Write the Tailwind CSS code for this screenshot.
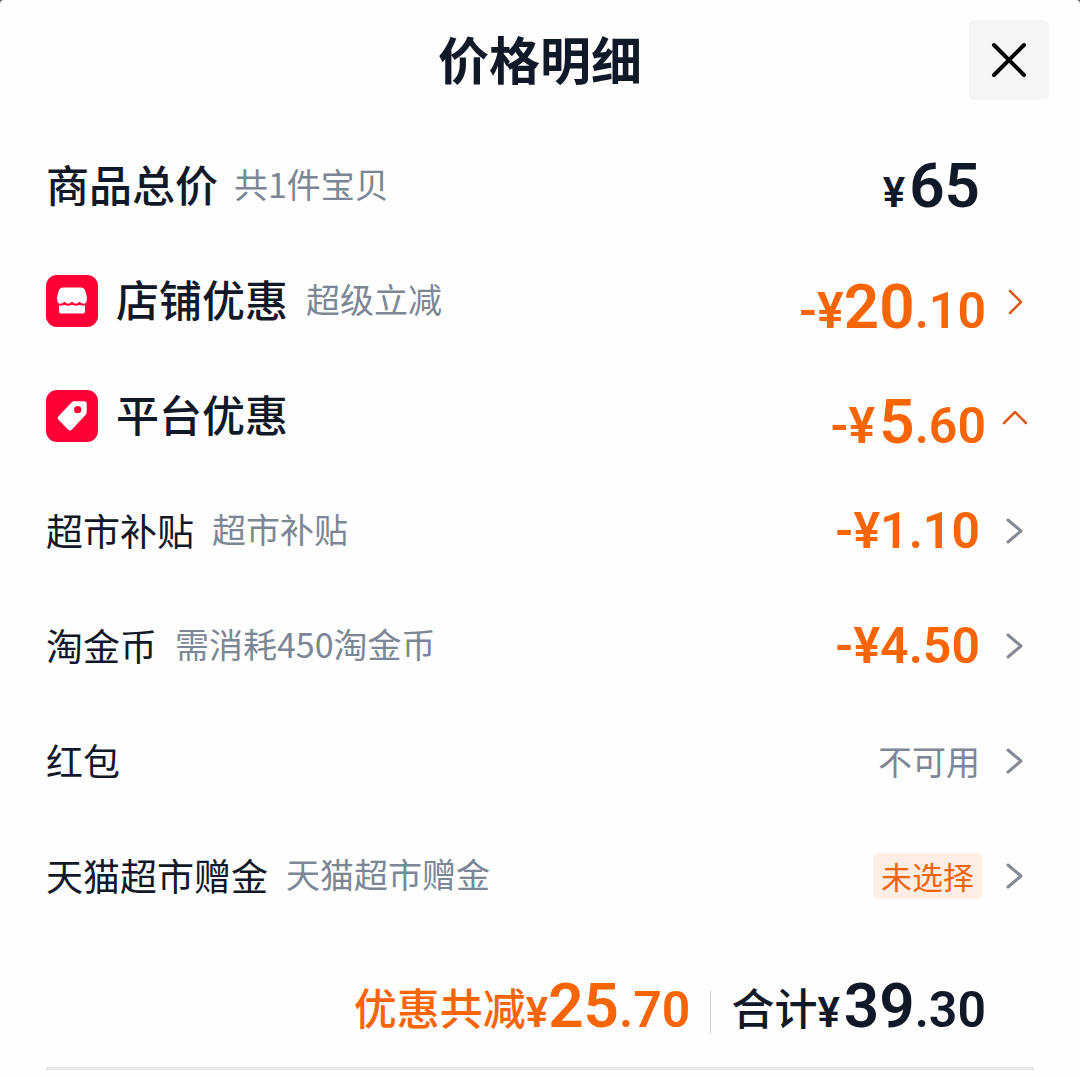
<!DOCTYPE html>
<html lang="zh-CN">
    <head>
        <meta charset="UTF-8">
        <meta name="viewport" content="width=device-width, initial-scale=1.0">
        <title>价格明细</title>
        <script src="https://cdn.jsdelivr.net/npm/@tailwindcss/browser@4"></script>
    </head>
    <body class="bg-[#555555] font-['Noto_Sans_CJK_SC',sans-serif] text-[#111827]">
        <main class="min-h-screen bg-[#fefefe] rounded-t-sm">
            <!-- Header -->
            <header class="grid grid-cols-[80px_1fr_80px] items-center h-30 px-[31px]">
                <h1 class="col-start-2 pb-1 text-center text-[51px] leading-none font-bold">价格明细</h1>
                <button type="button" aria-label="关闭" class="flex items-center justify-center size-20 rounded-md bg-[#f3f5f7] text-black">
                    <svg class="size-10" viewBox="0 0 40 40" fill="none" stroke="currentColor" stroke-width="4" stroke-linecap="round"><path d="M5 5L35 35M35 5L5 35"/></svg>
                </button>
            </header>

            <!-- Price rows -->
            <ul class="mt-2 px-[46px]">
                <li class="flex items-center h-[115px]">
                    <span class="pb-1 text-[43px] leading-none font-medium">商品总价</span>
                    <span class="ml-4 pb-1 text-[34px] leading-none text-[#7c8795]">共1件宝贝</span>
                    <span class="flex items-baseline ml-auto mr-[54px] font-[Roboto,sans-serif] font-semibold leading-none">
                        <span class="mr-1 text-[42px]">¥</span><span class="text-[62px]">65</span>
                    </span>
                </li>
                <li>
                    <button type="button" class="flex items-center w-full h-[115px]">
                        <svg class="size-[52px]" viewBox="0 0 52 52">
                            <rect width="52" height="52" rx="11" fill="#ff0036"/>
                            <path d="M17 12.500H35Q38 12.500 39.200 15.500L40.700 21Q41.500 27 39 29V36.500Q39 38.500 37 38.500H15Q13 38.500 13 36.500V29Q10.500 27 11.300 21L12.800 15.500Q14 12.500 17 12.500Z" fill="#fff"/>
                            <path d="M10 28Q15 31.500 18.500 28Q22.200 31.500 26 28Q29.800 31.500 33.500 28Q37 31.500 42 28" fill="none" stroke="#ff0036" stroke-width="2"/>
                        </svg>
                        <span class="ml-[18px] pb-1 text-[43px] leading-none font-medium">店铺优惠</span>
                        <span class="ml-[18px] pb-1 text-[34px] leading-none text-[#7c8795]">超级立减</span>
                        <span class="flex items-baseline ml-auto pt-3 font-[Roboto,sans-serif] font-semibold leading-none text-[#f86506]">
                            <span class="text-[50px]">-¥</span><span class="text-[62px]">20</span><span class="text-[50px]">.10</span>
                        </span>
                        <svg class="ml-2 size-10 text-[#dc5a20]" viewBox="0 0 40 40" fill="none" stroke="currentColor" stroke-width="2.500" stroke-linecap="round" stroke-linejoin="round"><path d="M16 10L27 21L16 32"/></svg>
                    </button>
                </li>
                <li>
                    <button type="button" aria-expanded="true" class="flex items-center w-full h-[115px]">
                        <svg class="size-[52px]" viewBox="0 0 52 52">
                            <rect width="52" height="52" rx="11" fill="#ff0036"/>
                            <path d="M28 11.300H38.500Q40.700 11.300 40.700 13.500V22Q40.700 23.500 39.700 24.700L26 39.500Q24 41.500 22 39.500L12.700 30Q10.800 28 12.700 26L25.500 12.500Q26.500 11.300 28 11.300Z" fill="#fff"/>
                            <circle cx="31.700" cy="19.700" r="3.600" fill="#ff0036"/>
                        </svg>
                        <span class="ml-[18px] pb-1 text-[43px] leading-none font-medium">平台优惠</span>
                        <span class="flex items-baseline ml-auto pt-3 font-[Roboto,sans-serif] font-semibold leading-none text-[#f86506]">
                            <span class="mr-1 text-[50px]">-¥</span><span class="text-[62px]">5</span><span class="text-[50px]">.60</span>
                        </span>
                        <svg class="ml-2 size-10 text-[#dc5a20]" viewBox="0 0 40 40" fill="none" stroke="currentColor" stroke-width="2.500" stroke-linecap="round" stroke-linejoin="round"><path d="M10 27L21 16L32 27"/></svg>
                    </button>
                </li>
                <li>
                    <button type="button" class="flex items-center w-full h-[115px]">
                        <span class="text-[37px] leading-none">超市补贴</span>
                        <span class="ml-[18px] pb-1 text-[34px] leading-none text-[#7c8795]">超市补贴</span>
                        <span class="ml-auto font-[Roboto,sans-serif] font-semibold text-[50px] leading-none text-[#f86506]">-¥1.10</span>
                        <svg class="ml-[14px] size-10 text-[#858993]" viewBox="0 0 40 40" fill="none" stroke="currentColor" stroke-width="3" stroke-linecap="round" stroke-linejoin="round"><path d="M14 9L27 20L14 31"/></svg>
                    </button>
                </li>
                <li>
                    <button type="button" class="flex items-center w-full h-[115px]">
                        <span class="text-[37px] leading-none">淘金币</span>
                        <span class="ml-[18px] pb-1 text-[34px] leading-none text-[#7c8795]">需消耗450淘金币</span>
                        <span class="ml-auto font-[Roboto,sans-serif] font-semibold text-[50px] leading-none text-[#f86506]">-¥4.50</span>
                        <svg class="ml-[14px] size-10 text-[#858993]" viewBox="0 0 40 40" fill="none" stroke="currentColor" stroke-width="3" stroke-linecap="round" stroke-linejoin="round"><path d="M14 9L27 20L14 31"/></svg>
                    </button>
                </li>
                <li>
                    <button type="button" class="flex items-center w-full h-[115px]">
                        <span class="text-[37px] leading-none">红包</span>
                        <span class="ml-auto text-[34px] leading-none text-[#7c8795]">不可用</span>
                        <svg class="ml-[14px] size-10 text-[#858993]" viewBox="0 0 40 40" fill="none" stroke="currentColor" stroke-width="3" stroke-linecap="round" stroke-linejoin="round"><path d="M14 9L27 20L14 31"/></svg>
                    </button>
                </li>
                <li>
                    <button type="button" class="flex items-center w-full h-[115px]">
                        <span class="text-[37px] leading-none">天猫超市赠金</span>
                        <span class="ml-[18px] pb-1 text-[34px] leading-none text-[#7c8795]">天猫超市赠金</span>
                        <span class="flex items-center ml-auto h-[46px] px-2 rounded-md bg-[#ffeee4] text-[31px] leading-none text-[#ee650f]">未选择</span>
                        <svg class="ml-3 size-10 text-[#858993]" viewBox="0 0 40 40" fill="none" stroke="currentColor" stroke-width="3" stroke-linecap="round" stroke-linejoin="round"><path d="M14 9L27 20L14 31"/></svg>
                    </button>
                </li>
            </ul>

            <!-- Totals -->
            <footer class="mx-[46px] flex items-center justify-end h-[137px] pt-3 pr-12 border-b-3 border-[#e8e8e8]">
                <p class="flex items-center leading-none text-[#f86506]">
                    <span class="text-[43px] font-medium">优惠共减</span>
                    <span class="flex items-baseline font-[Roboto,sans-serif] font-semibold">
                        <span class="text-[42px]">¥</span><span class="text-[62px]">25</span><span class="text-[50px]">.70</span>
                    </span>
                </p>
                <span class="mx-5 mt-3 w-px h-[43px] bg-[#d0d3d8]"></span>
                <p class="flex items-center leading-none">
                    <span class="text-[43px] font-medium">合计</span>
                    <span class="flex items-baseline font-[Roboto,sans-serif] font-semibold">
                        <span class="mr-1 text-[42px]">¥</span><span class="text-[62px]">39</span><span class="text-[50px]">.30</span>
                    </span>
                </p>
            </footer>
        </main>
    </body>
</html>
